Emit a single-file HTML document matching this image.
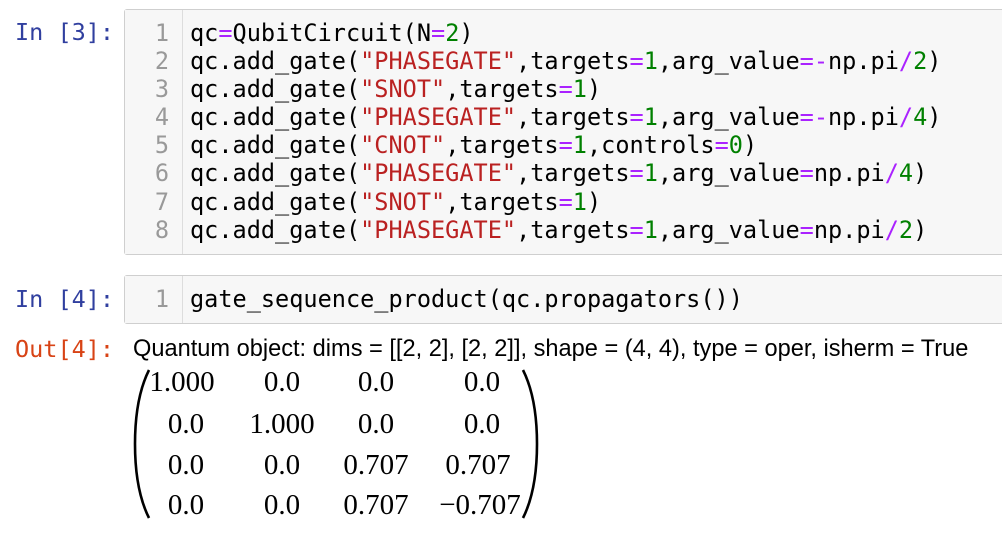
<!DOCTYPE html>
<html><head><style>
body{margin:0;width:1002px;height:533px;background:#fff;position:relative;overflow:hidden;font-family:"DejaVu Sans Mono","Liberation Mono",monospace}
.p{position:absolute;font-size:23.5px;line-height:28px}
.in{color:#303F9F}.out{color:#D84315}
.box{position:absolute;left:124px;width:900px;background:#f7f7f7;border:1px solid #cfcfcf;border-radius:3px}
.gut{position:absolute;left:0;top:0;bottom:0;width:57px;border-right:1px solid #ddd;background:#f7f7f7}
.ln{position:absolute;left:0;width:44px;text-align:right;color:#999;font-size:23.55px;line-height:28.1px}
.code{position:absolute;left:65px;font-size:23.55px;line-height:28.1px;color:#000;white-space:pre}
.s{color:#BA2121}.o{color:#AA22FF}.n{color:#008000}
.m{position:absolute;font-family:"Liberation Serif",serif;font-size:29px;line-height:30px;text-align:center;width:100px}
</style></head><body>
<div class="p in" style="left:15px;top:18px">In [3]:</div>
<div class="box" style="top:9px;height:244px"><div class="gut"></div>
<div class="ln" style="top:9px">1<br>2<br>3<br>4<br>5<br>6<br>7<br>8</div>
<div class="code" style="top:9px">qc<span class="o">=</span>QubitCircuit(N<span class="o">=</span><span class="n">2</span>)
qc.add_gate(<span class="s">"PHASEGATE"</span>,targets<span class="o">=</span><span class="n">1</span>,arg_value<span class="o">=-</span>np.pi<span class="o">/</span><span class="n">2</span>)
qc.add_gate(<span class="s">"SNOT"</span>,targets<span class="o">=</span><span class="n">1</span>)
qc.add_gate(<span class="s">"PHASEGATE"</span>,targets<span class="o">=</span><span class="n">1</span>,arg_value<span class="o">=-</span>np.pi<span class="o">/</span><span class="n">4</span>)
qc.add_gate(<span class="s">"CNOT"</span>,targets<span class="o">=</span><span class="n">1</span>,controls<span class="o">=</span><span class="n">0</span>)
qc.add_gate(<span class="s">"PHASEGATE"</span>,targets<span class="o">=</span><span class="n">1</span>,arg_value<span class="o">=</span>np.pi<span class="o">/</span><span class="n">4</span>)
qc.add_gate(<span class="s">"SNOT"</span>,targets<span class="o">=</span><span class="n">1</span>)
qc.add_gate(<span class="s">"PHASEGATE"</span>,targets<span class="o">=</span><span class="n">1</span>,arg_value<span class="o">=</span>np.pi<span class="o">/</span><span class="n">2</span>)</div></div>
<div class="p in" style="left:15px;top:285px">In [4]:</div>
<div class="box" style="top:275px;height:47px"><div class="gut"></div>
<div class="ln" style="top:9px">1</div>
<div class="code" style="top:9px">gate_sequence_product(qc.propagators())</div></div>
<div class="p out" style="left:15px;top:335px">Out[4]:</div>
<div style="position:absolute;left:133px;top:335px;font-family:'Liberation Sans',sans-serif;font-size:23.6px;line-height:28px;white-space:nowrap">Quantum object: dims = [[2, 2], [2, 2]], shape = (4, 4), type = oper, isherm = True</div>
<svg style="position:absolute;left:128px;top:368px" width="420" height="155">
<path d="M21 2 Q7 30 7 76 Q7 122 21 150" fill="none" stroke="#000" stroke-width="2.6"/>
<path d="M395 2 Q409 30 409 76 Q409 122 395 150" fill="none" stroke="#000" stroke-width="2.6"/>
</svg>
<div class="m" style="left:132px;top:367px">1.000</div><div class="m" style="left:232px;top:367px">0.0</div><div class="m" style="left:326px;top:367px">0.0</div><div class="m" style="left:432px;top:367px">0.0</div>
<div class="m" style="left:136px;top:409px">0.0</div><div class="m" style="left:232px;top:409px">1.000</div><div class="m" style="left:326px;top:409px">0.0</div><div class="m" style="left:432px;top:409px">0.0</div>
<div class="m" style="left:136px;top:450px">0.0</div><div class="m" style="left:232px;top:450px">0.0</div><div class="m" style="left:326px;top:450px">0.707</div><div class="m" style="left:428px;top:450px">0.707</div>
<div class="m" style="left:136px;top:490px">0.0</div><div class="m" style="left:232px;top:490px">0.0</div><div class="m" style="left:326px;top:490px">0.707</div><div class="m" style="left:430px;top:490px">−0.707</div>
</body></html>
